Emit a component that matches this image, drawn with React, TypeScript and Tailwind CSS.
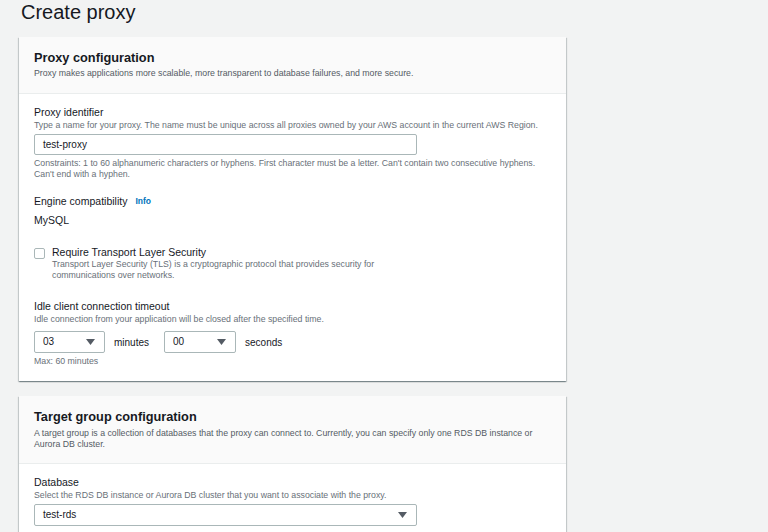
const font = { fontFamily: '"Liberation Sans", Arial, sans-serif' }

const cardShadow =
  'w-[547px] bg-white shadow-[0_1px_1px_0_rgba(0,28,36,0.3),1px_1px_1px_0_rgba(0,28,36,0.15),-1px_1px_1px_0_rgba(0,28,36,0.15)]'

function Caret() {
  return (
    <svg width="9" height="6" viewBox="0 0 9 6" className="shrink-0">
      <path d="M0 0h9L4.5 6z" fill="#545b64" />
    </svg>
  )
}

function Select({ value, width }: { value: string; width: string }) {
  return (
    <div className={`flex h-[22px] ${width} items-center justify-between rounded-[2px] border border-[#aab7b8] bg-white pl-[8px] pr-[9px]`}>
      <span className="text-[10px] leading-none text-[#16191f]">{value}</span>
      <Caret />
    </div>
  )
}

function Label({ children }: { children: React.ReactNode }) {
  return <div className="text-[10.5px] leading-[14px] text-[#16191f]">{children}</div>
}

function Hint({ children }: { children: React.ReactNode }) {
  return <div className="text-[8.75px] leading-[12px] text-[#687078]">{children}</div>
}

export default function App() {
  return (
    <div style={font} className="min-h-screen w-full bg-[#f2f3f3] pl-[19px] pb-10">
      <h1 className="h-[37px] pl-[2px] text-[20px] leading-[25px] text-[#16191f]">Create proxy</h1>

      <div className={cardShadow}>
        <div className="border-b border-[#eaeded] bg-[#fafafa] px-[15px] pt-[12px] pb-[14px]">
          <h2 className="text-[12.75px] font-bold leading-[18px] text-[#16191f]">Proxy configuration</h2>
          <div className="text-[8.75px] leading-[12px] text-[#545b64]">
            Proxy makes applications more scalable, more transparent to database failures, and more secure.
          </div>
        </div>

        <div className="px-[15px] pt-[11px] pb-[14px]">
          <Label>Proxy identifier</Label>
          <Hint>Type a name for your proxy. The name must be unique across all proxies owned by your AWS account in the current AWS Region.</Hint>
          <div className="mt-[3px] flex h-[21px] w-[383px] items-center rounded-[2px] border border-[#aab7b8] bg-white px-[8px] text-[10px] text-[#16191f]">
            test-proxy
          </div>
          <div className="mt-[3px] text-[8.75px] leading-[11px] text-[#687078]">
            Constraints: 1 to 60 alphanumeric characters or hyphens. First character must be a letter. Can't contain two consecutive hyphens.
            <br />
            Can't end with a hyphen.
          </div>

          <div className="mt-[14px] flex items-center gap-[8px]">
            <Label>Engine compatibility</Label>
            <span className="text-[8.5px] font-bold text-[#0073bb]">Info</span>
          </div>
          <div className="mt-[5px] text-[10.5px] leading-[14px] text-[#16191f]">MySQL</div>

          <div className="mt-[18px] flex gap-[7px]">
            <div className="mt-[3px] h-[11px] w-[11px] rounded-[2px] border border-[#aab7b8] bg-white" />
            <div>
              <Label>Require Transport Layer Security</Label>
              <div className="text-[8.75px] leading-[11px] text-[#687078]">
                Transport Layer Security (TLS) is a cryptographic protocol that provides security for
                <br />
                communications over networks.
              </div>
            </div>
          </div>

          <div className="mt-[18px]">
            <Label>Idle client connection timeout</Label>
            <Hint>Idle connection from your application will be closed after the specified time.</Hint>
          </div>
          <div className="mt-[6px] flex items-center">
            <Select value="03" width="w-[71px]" />
            <span className="ml-[9px] text-[10px] text-[#16191f]">minutes</span>
            <div className="ml-[15px]">
              <Select value="00" width="w-[72px]" />
            </div>
            <span className="ml-[9px] text-[10px] text-[#16191f]">seconds</span>
          </div>
          <div className="mt-[3px] text-[8.75px] leading-[11px] text-[#687078]">Max: 60 minutes</div>
        </div>
      </div>

      <div className={`mt-[15px] ${cardShadow}`}>
        <div className="border-b border-[#eaeded] bg-[#fafafa] px-[15px] pt-[12px] pb-[13px]">
          <h2 className="text-[12.75px] font-bold leading-[18px] text-[#16191f]">Target group configuration</h2>
          <div className="mt-[2px] text-[8.75px] leading-[11px] text-[#545b64]">
            A target group is a collection of databases that the proxy can connect to. Currently, you can specify only one RDS DB instance or
            <br />
            Aurora DB cluster.
          </div>
        </div>
        <div className="px-[15px] pt-[11px] pb-[14px]">
          <Label>Database</Label>
          <Hint>Select the RDS DB instance or Aurora DB cluster that you want to associate with the proxy.</Hint>
          <div className="mt-[3px]">
            <Select value="test-rds" width="w-[383px]" />
          </div>
        </div>
      </div>
    </div>
  )
}
